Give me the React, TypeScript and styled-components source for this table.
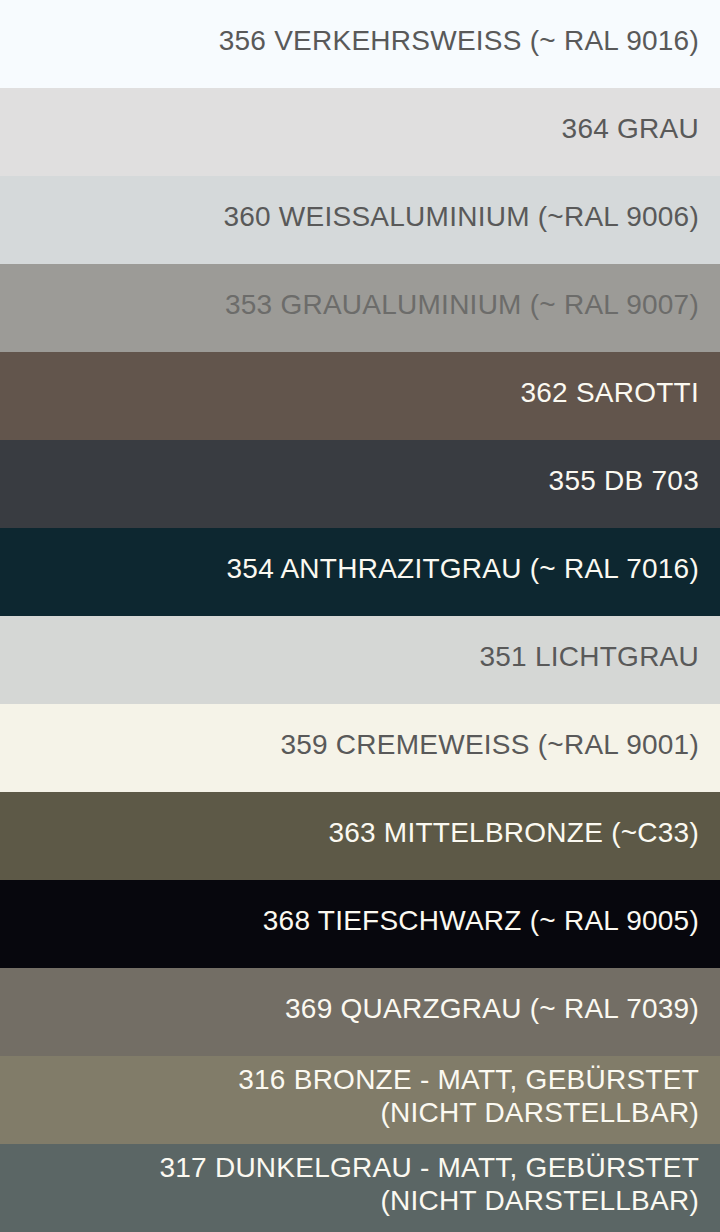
import styled, { createGlobalStyle } from "styled-components";

const GlobalStyle = createGlobalStyle`
    html, body {
        margin: 0;
        padding: 0;
        background: #ffffff;
    }
    * {
        box-sizing: border-box;
    }
`

const List = styled.ul`
    list-style: none;
    margin: 0;
    padding: 0;
    width: 720px;
    font-family: "Liberation Sans", Arial, Helvetica, sans-serif;
`

const Swatch = styled.li<{ bg: string; fg: string }>`
    height: 88px;
    display: flex;
    align-items: center;
    justify-content: flex-end;
    padding: 0 21px 8px 20px;
    background-color: ${props => props.bg};
    color: ${props => props.fg};
    font-size: 28px;
    line-height: 33px;
    letter-spacing: 0.25px;
    text-align: right;
`

interface IColor {
    name: string;
    bg: string;
    fg: string;
}

const DARK_TEXT = "#595959";
const LIGHT_TEXT = "#fbf9f1";

const colors: IColor[] = [
    { name: "356 VERKEHRSWEISS (~ RAL 9016)", bg: "#f7fbfe", fg: DARK_TEXT },
    { name: "364 GRAU", bg: "#e0dfdf", fg: DARK_TEXT },
    { name: "360 WEISSALUMINIUM (~RAL 9006)", bg: "#d5d9da", fg: DARK_TEXT },
    { name: "353 GRAUALUMINIUM (~ RAL 9007)", bg: "#9c9b97", fg: "#6c6c6a" },
    { name: "362 SAROTTI", bg: "#62554c", fg: LIGHT_TEXT },
    { name: "355 DB 703", bg: "#393c41", fg: LIGHT_TEXT },
    { name: "354 ANTHRAZITGRAU (~ RAL 7016)", bg: "#0d2730", fg: LIGHT_TEXT },
    { name: "351 LICHTGRAU", bg: "#d5d7d5", fg: DARK_TEXT },
    { name: "359 CREMEWEISS (~RAL 9001)", bg: "#f5f3e8", fg: DARK_TEXT },
    { name: "363 MITTELBRONZE (~C33)", bg: "#5d5947", fg: LIGHT_TEXT },
    { name: "368 TIEFSCHWARZ (~ RAL 9005)", bg: "#07070d", fg: LIGHT_TEXT },
    { name: "369 QUARZGRAU (~ RAL 7039)", bg: "#736e65", fg: LIGHT_TEXT },
    { name: "316 BRONZE - MATT, GEBÜRSTET\n(NICHT DARSTELLBAR)", bg: "#817c69", fg: LIGHT_TEXT },
    { name: "317 DUNKELGRAU - MATT, GEBÜRSTET\n(NICHT DARSTELLBAR)", bg: "#5b6665", fg: LIGHT_TEXT },
]

const Label = styled.span`
    white-space: pre-line;
`

function App() {
    return (
        <>
            <GlobalStyle />
            <List>
                {colors.map(color =>
                    <Swatch key={color.name} bg={color.bg} fg={color.fg}>
                        <Label>{color.name}</Label>
                    </Swatch>
                )}
            </List>
        </>
    )
}

export default App;
